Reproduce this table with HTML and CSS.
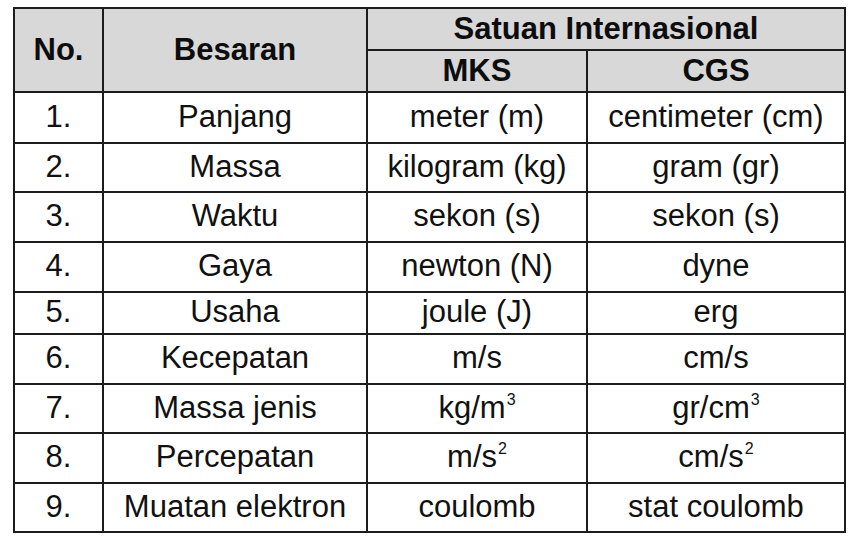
FILE: index.html
```html
<!DOCTYPE html>
<html>
<head>
<meta charset="utf-8">
<link rel="stylesheet" href="styles.css">
</head>
<body>
<table class="units">
  <colgroup>
    <col class="c-no">
    <col class="c-name">
    <col class="c-mks">
    <col class="c-cgs">
  </colgroup>
  <thead>
    <tr class="h1">
      <th rowspan="2">No.</th>
      <th rowspan="2">Besaran</th>
      <th colspan="2">Satuan Internasional</th>
    </tr>
    <tr class="h2">
      <th>MKS</th>
      <th>CGS</th>
    </tr>
  </thead>
  <tbody>
    <tr class="r51"><td>1.</td><td>Panjang</td><td>meter (m)</td><td>centimeter (cm)</td></tr>
    <tr class="r49"><td>2.</td><td>Massa</td><td>kilogram (kg)</td><td>gram (gr)</td></tr>
    <tr class="r50"><td>3.</td><td>Waktu</td><td>sekon (s)</td><td>sekon (s)</td></tr>
    <tr class="r50"><td>4.</td><td>Gaya</td><td>newton (N)</td><td>dyne</td></tr>
    <tr class="r42"><td>5.</td><td>Usaha</td><td>joule (J)</td><td>erg</td></tr>
    <tr class="r50"><td>6.</td><td>Kecepatan</td><td>m/s</td><td>cm/s</td></tr>
    <tr class="r49"><td>7.</td><td>Massa jenis</td><td>kg/m<sup>3</sup></td><td>gr/cm<sup>3</sup></td></tr>
    <tr class="r50"><td>8.</td><td>Percepatan</td><td>m/s<sup>2</sup></td><td>cm/s<sup>2</sup></td></tr>
    <tr class="r49"><td>9.</td><td>Muatan elektron</td><td>coulomb</td><td>stat coulomb</td></tr>
  </tbody>
</table>
</body>
</html>
```

FILE: styles.css
```css
html, body {
  margin: 0;
  padding: 0;
  background: #ffffff;
}

body {
  padding: 7px 0 0 13px;
  font-family: "Liberation Sans", Arial, sans-serif;
  color: #111111;
}

.units {
  border-collapse: collapse;
  table-layout: fixed;
  width: 833px;
  border: 2px solid #1c1c1c;
}

.c-no { width: 89px; }
.c-name { width: 264px; }
.c-mks { width: 220px; }
.c-cgs { width: 258px; }

.units th,
.units td {
  border: 2px solid #1c1c1c;
  padding: 0;
  text-align: center;
  vertical-align: middle;
  font-size: 31px;
  line-height: 1;
  white-space: nowrap;
}

.units th {
  background: #d8d8d8;
  font-weight: bold;
  color: #0d0d0d;
  padding-bottom: 2px;
}

.units td {
  font-weight: normal;
  padding-bottom: 3px;
}

.h1, .h2 { height: 42px; }
.r51 { height: 51px; }
.r50 { height: 50px; }
.r49 { height: 49px; }
.r42 { height: 42px; }

.units sup {
  font-size: 16px;
  line-height: 0;
  vertical-align: 13px;
  margin-left: 1px;
}
```
